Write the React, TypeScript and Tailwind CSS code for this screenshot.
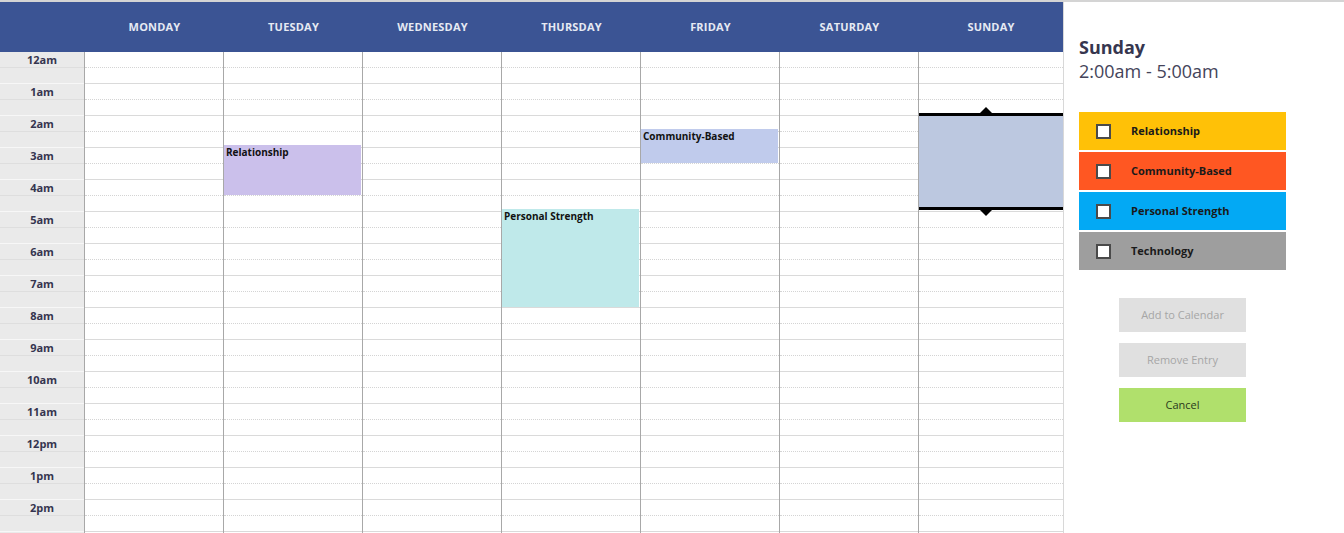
import React from 'react';

const days = ['MONDAY', 'TUESDAY', 'WEDNESDAY', 'THURSDAY', 'FRIDAY', 'SATURDAY', 'SUNDAY'];
// only the hours that fit in the visible window
const hours = ['12am', '1am', '2am', '3am', '4am', '5am', '6am', '7am', '8am', '9am', '10am', '11am', '12pm', '1pm', '2pm'];

// events are laid on their day column; top/height in px from the grid top
const events: Record<number, { label: string; top: number; height: number; cls: string }[]> = {
  1: [{ label: 'Relationship', top: 93, height: 50, cls: 'bg-[#cbc0eb]' }],
  3: [{ label: 'Personal Strength', top: 157, height: 98, cls: 'bg-[#bfe9ea]' }],
  4: [{ label: 'Community-Based', top: 77, height: 34, cls: 'bg-[#c0cbec]' }],
};

const categories = [
  { label: 'Relationship', cls: 'bg-[#ffc107]' },
  { label: 'Community-Based', cls: 'bg-[#ff5722]' },
  { label: 'Personal Strength', cls: 'bg-[#03a9f4]' },
  { label: 'Technology', cls: 'bg-[#9e9e9e]' },
];

function DayColumn({ index }: { index: number }) {
  const last = index === 6;
  return (
    <div className={`relative shrink-0 flex flex-col ${last ? 'w-[144px]' : 'w-[139px] border-r border-[#a8a8a8]'}`}>
      {hours.map((h) => (
        <div key={h} className="h-[32px] shrink-0 border-b border-[#dadada] flex flex-col">
          <div className="h-[16px] border-b border-dotted border-[#d4d4d4]" />
        </div>
      ))}
      {(events[index] || []).map((ev) => (
        <div
          key={ev.label}
          className={`absolute left-0 right-[1px] px-[2px] text-[10px] font-bold leading-[14px] text-[#111] ${ev.cls}`}
          style={{ top: ev.top, height: ev.height }}
        >
          {ev.label}
        </div>
      ))}
      {last && (
        // current selection with its resize handles
        <div className="absolute left-0 right-0 top-[61px] h-[97px] bg-[#bcc8e0] border-y-[3px] border-black">
          <div className="absolute left-[61px] -top-[9px] w-0 h-0 border-x-[6px] border-x-transparent border-b-[6px] border-b-black" />
          <div className="absolute left-[61px] -bottom-[9px] w-0 h-0 border-x-[6px] border-x-transparent border-t-[6px] border-t-black" />
        </div>
      )}
    </div>
  );
}

export default function App() {
  return (
    <div
      className="w-[1344px] h-[533px] overflow-hidden flex border-t-2 border-[#d4d4d4] bg-white"
      style={{ fontFamily: '"Open Sans", "Noto Sans", sans-serif' }}
    >
      <div className="w-[1064px] shrink-0 flex flex-col border-r border-[#d8d8d8]">
        <div className="h-[50px] shrink-0 bg-[#3b5494] flex items-center text-[11px] font-bold text-[#e6eaf3] tracking-[0.2px]">
          <div className="w-[85px] shrink-0" />
          {days.map((d, i) => (
            <div key={d} className={`shrink-0 text-center ${i === 6 ? 'w-[144px]' : 'w-[139px]'}`}>
              {d}
            </div>
          ))}
        </div>
        <div className="flex flex-1 overflow-hidden">
          <div className="w-[85px] shrink-0 bg-[#eaeaea] border-r border-[#a8a8a8] flex flex-col">
            {hours.map((h) => (
              <div key={h} className="h-[32px] shrink-0 border-b border-[#f7f7f7] flex flex-col">
                <div className="h-[16px] border-b border-[#dedede] text-center text-[11px] font-bold leading-[16px] text-[#35354f]">
                  {h}
                </div>
              </div>
            ))}
          </div>
          {days.map((d, i) => (
            <DayColumn key={d} index={i} />
          ))}
        </div>
      </div>
      <div className="flex-1 pl-[15px] pt-[33px]">
        <div className="text-[18px] font-bold leading-[24px] text-[#36364f]">Sunday</div>
        <div className="text-[18px] leading-[24px] text-[#44445a]">2:00am - 5:00am</div>
        <div className="mt-[29px] w-[207px] flex flex-col gap-[2px]">
          {categories.map((c) => (
            <div key={c.label} className={`h-[38px] flex items-center ${c.cls}`}>
              <div className="ml-[17px] w-[15px] h-[15px] bg-white border-2 border-[#4a4a4a]" />
              <div className="ml-[20px] text-[11px] font-bold text-[#1a1a1a]">{c.label}</div>
            </div>
          ))}
        </div>
        <div className="ml-[40px] mt-[28px] w-[127px] flex flex-col gap-[11px] text-[11px]">
          <button className="h-[34px] bg-[#e0e0e0] text-[#a6a6a6]">Add to Calendar</button>
          <button className="h-[34px] bg-[#e0e0e0] text-[#a6a6a6]">Remove Entry</button>
          <button className="h-[34px] bg-[#b0e06c] text-[#2a3a1c]">Cancel</button>
        </div>
      </div>
    </div>
  );
}
